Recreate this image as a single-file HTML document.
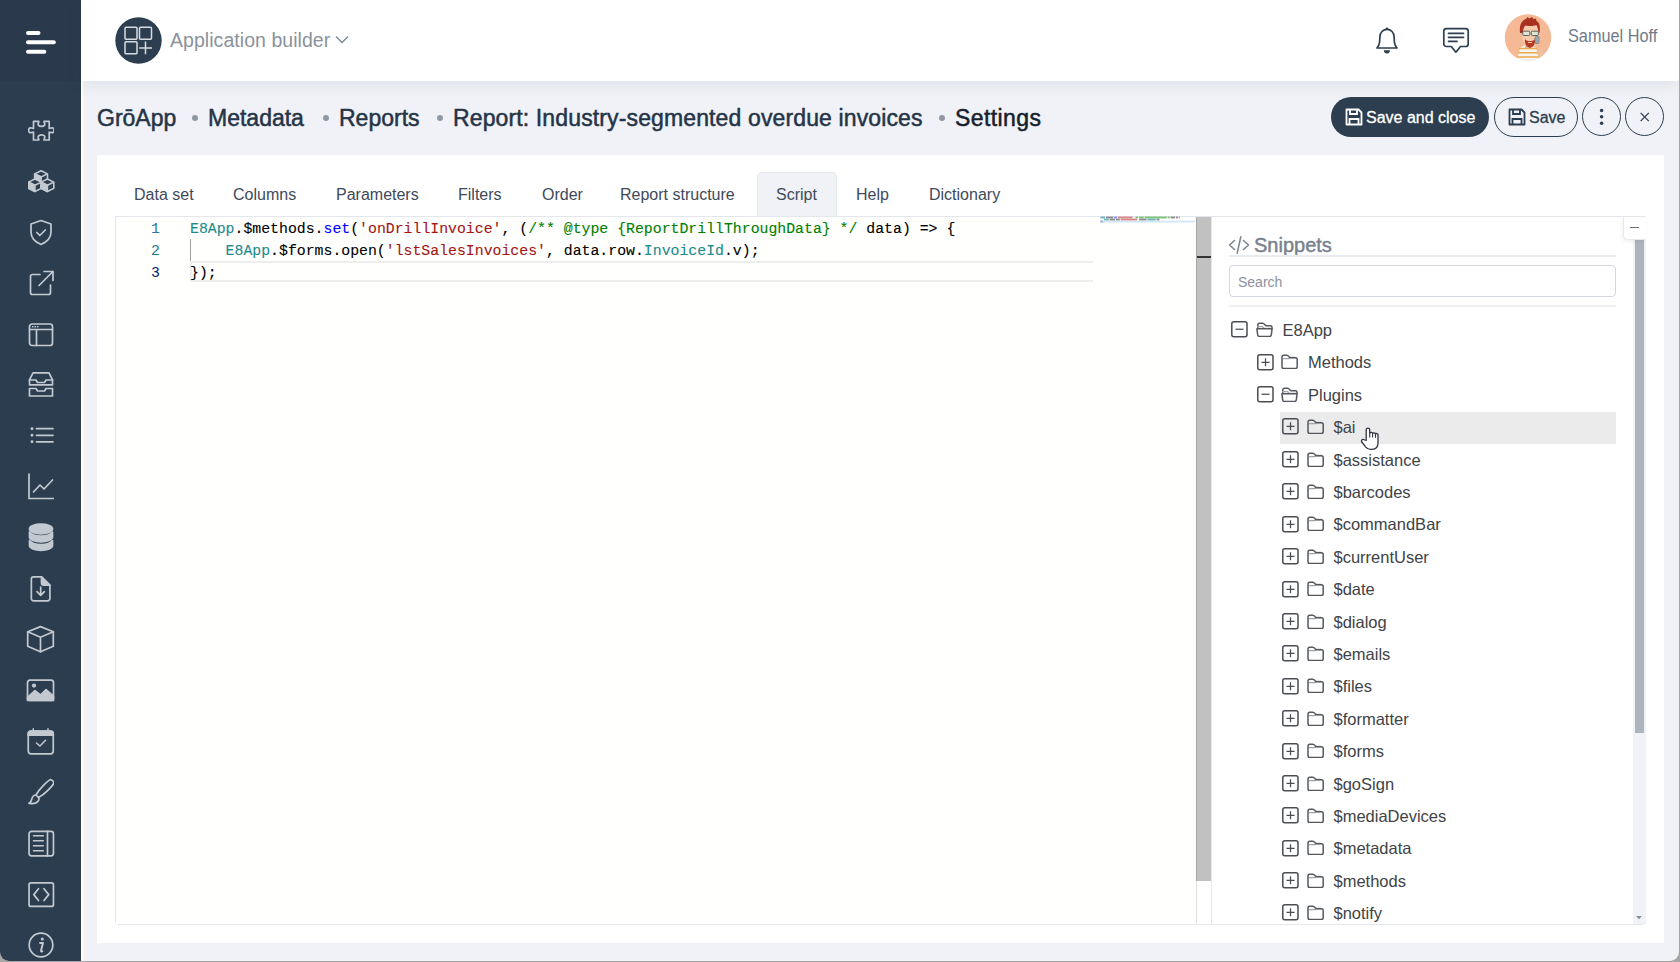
<!DOCTYPE html>
<html><head><meta charset="utf-8">
<style>
*{box-sizing:border-box;margin:0;padding:0}
html,body{width:1680px;height:962px;overflow:hidden;background:#a6a6a6;font-family:"Liberation Sans",sans-serif}
.abs{position:absolute}
#win{position:absolute;left:0;top:0;width:1679px;height:961px;border-radius:0 0 9px 9px;overflow:hidden;background:#f0f2f7}
#side{position:absolute;left:0;top:0;width:81px;height:961px;background:#2d3d50}
#sidetop{position:absolute;left:0;top:0;width:81px;height:81px;background:#2a3a4c}
#hdr{position:absolute;left:81px;top:0;width:1598px;height:81px;background:#fff;box-shadow:0 4px 14px rgba(50,60,80,.085)}
.crumb{position:absolute;top:104.7px;font-size:23px;color:#253447;white-space:nowrap;-webkit-text-stroke:.5px #253447}
.dot{position:absolute;top:115px;width:6px;height:6px;border-radius:50%;background:#8f98a3}
#card{position:absolute;left:97px;top:155px;width:1567px;height:788px;background:#fff}
.tab{position:absolute;top:185.5px;font-size:16px;color:#3e4a59;white-space:nowrap;transform-origin:0 0}
#tabact{position:absolute;left:757px;top:172px;width:80px;height:45px;background:#f0f2f7;border:1px solid #e4e7ed;border-bottom:none;border-radius:5px 5px 0 0}
#ed{position:absolute;left:115px;top:216px;width:1531px;height:709px;border:1px solid #e3e6eb;background:#fff;border-radius:0 0 4px 4px}
#code{position:absolute;left:116px;top:217px;width:1080px;height:707px;background:#fffffd}
.ln{position:absolute;left:116px;width:44px;text-align:right;font-family:"Liberation Mono",monospace;font-size:14.8px;color:#237893}
.cl{position:absolute;left:190px;font-family:"Liberation Mono",monospace;font-size:14.835px;color:#000;white-space:pre;-webkit-text-stroke:.1px currentColor}
.k1{color:#218a8e}.k2{color:#0000ff}.k3{color:#a31515}.k4{color:#008000}.k5{color:#001080}
#sb{position:absolute;left:1196px;top:217px;width:16px;height:664px;background:#c1c1c1;border-left:1px solid #a8a8a8}
#sbline{position:absolute;left:1196px;top:881px;width:1px;height:42px;background:#e0e0e0}
#sbr{position:absolute;left:1211px;top:217px;width:1px;height:707px;background:#e6e8ec}
.tree{position:absolute;font-size:16.5px;color:#404347;white-space:nowrap}
</style></head><body>
<div id="win">
  <div id="side"></div>
  <div id="sidetop"></div>
  <div class="abs" style="left:81px;top:0;width:2px;height:961px;background:#fff"></div>
  <div id="hdr"></div>
  <svg class="abs" style="left:27.5px;top:119px" width="26" height="22" viewBox="0 0 26 22" fill="none" stroke="#c3c9d0" stroke-width="1.7" stroke-linejoin="round" stroke-linecap="round"><path d="M5.5 2.3H10.8C10.8 4 9.5 4.8 10.5 6.3C11.5 7.8 15.5 7.8 16.5 6.3C17.5 4.8 16 4 16 2.3H21.2V9.5C23 9.5 24 8.3 25 9C26.5 10 26.5 12.5 25 13.5C24 14.2 23 13 21.2 13V21H16C16 19.3 17.5 18.5 16.5 17C15.5 15.5 11.5 15.5 10.5 17C9.5 18.5 10.8 19.3 10.8 21H5.5V13C3.7 13 2.7 14.2 1.7 13.5C.2 12.5 .2 10 1.7 9C2.7 8.3 3.7 9.5 5.5 9.5Z"/></svg>
  <svg class="abs" style="left:27.5px;top:169px" width="28" height="26" viewBox="0 0 28 26"><path d="M13.10 1.80 L19.50 4.90 L19.50 11.20 L13.10 14.30 L6.70 11.20 L6.70 4.90Z" fill="#2d3d50" stroke="#c3c9d0" stroke-width="1.6" stroke-linejoin="round"/><path d="M6.70 4.90 L13.10 8.00 L13.10 14.30 L6.70 11.20Z" fill="#c3c9d0" stroke="#c3c9d0" stroke-width="1.6" stroke-linejoin="round"/><path d="M6.70 4.90L13.10 8.00L19.50 4.90" fill="none" stroke="#c3c9d0" stroke-width="1.6" stroke-linejoin="round"/><path d="M6.90 10.00 L13.30 13.10 L13.30 19.40 L6.90 22.50 L0.50 19.40 L0.50 13.10Z" fill="#2d3d50" stroke="#c3c9d0" stroke-width="1.6" stroke-linejoin="round"/><path d="M0.50 13.10 L6.90 16.20 L6.90 22.50 L0.50 19.40Z" fill="#c3c9d0" stroke="#c3c9d0" stroke-width="1.6" stroke-linejoin="round"/><path d="M0.50 13.10L6.90 16.20L13.30 13.10" fill="none" stroke="#c3c9d0" stroke-width="1.6" stroke-linejoin="round"/><path d="M19.40 10.00 L25.80 13.10 L25.80 19.40 L19.40 22.50 L13.00 19.40 L13.00 13.10Z" fill="#2d3d50" stroke="#c3c9d0" stroke-width="1.6" stroke-linejoin="round"/><path d="M13.00 13.10 L19.40 16.20 L19.40 22.50 L13.00 19.40Z" fill="#c3c9d0" stroke="#c3c9d0" stroke-width="1.6" stroke-linejoin="round"/><path d="M13.00 13.10L19.40 16.20L25.80 13.10" fill="none" stroke="#c3c9d0" stroke-width="1.6" stroke-linejoin="round"/></svg>
  <svg class="abs" style="left:27.5px;top:219px" width="26" height="28" viewBox="0 0 26 28" fill="none" stroke="#c3c9d0" stroke-width="1.7" stroke-linejoin="round" stroke-linecap="round"><path d="M13 1.5l10 3.5v8c0 6-4.3 10-10 12.5-5.7-2.5-10-6.5-10-12.5v-8z"/><path d="M8.8 13.5l3 3 5.5-5.5"/></svg>
  <svg class="abs" style="left:27.5px;top:269px" width="26" height="28" viewBox="0 0 26 28" fill="none" stroke="#c3c9d0" stroke-width="1.7" stroke-linejoin="round" stroke-linecap="round"><path d="M12 5.5h-7.5a2 2 0 0 0-2 2v16a2 2 0 0 0 2 2h16a2 2 0 0 0 2-2v-7.5"/><path d="M11 16.5l14-14M16 2.5h9v9"/></svg>
  <svg class="abs" style="left:27.5px;top:322px" width="26" height="26" viewBox="0 0 26 26" fill="none" stroke="#c3c9d0" stroke-width="1.7" stroke-linejoin="round" stroke-linecap="round"><rect x="1.5" y="2" width="23" height="21.5" rx="2.5"/><path d="M1.5 7.5h23M8.5 7.5v16"/><path d="M4.5 4.8h.5M7 4.8h.5M9.5 4.8h.5" stroke-width="1.4"/></svg>
  <svg class="abs" style="left:27.5px;top:371px" width="26" height="28" viewBox="0 0 26 28" fill="none" stroke="#c3c9d0" stroke-width="1.7" stroke-linejoin="round" stroke-linecap="round"><path d="M5 1.8h16l3.5 7v5h-23v-5z"/><path d="M1.5 9h6.5l1.5 2.5h7l1.5-2.5h6.5"/><path d="M1.5 17.5h6.5l1.5 2.5h7l1.5-2.5h6.5v7.5h-23z"/></svg>
  <svg class="abs" style="left:27.5px;top:426px" width="26" height="20" viewBox="0 0 26 20" fill="none" stroke="#c3c9d0" stroke-width="1.7" stroke-linejoin="round" stroke-linecap="round"><circle cx="4" cy="2.7" r=".6" fill="#c3c9d0"/><circle cx="4" cy="9.3" r=".6" fill="#c3c9d0"/><circle cx="4" cy="15.8" r=".6" fill="#c3c9d0"/><path d="M8.5 2.7h16.5M8.5 9.3h16.5M8.5 15.8h16.5"/></svg>
  <svg class="abs" style="left:27.5px;top:473px" width="26" height="28" viewBox="0 0 26 28" fill="none" stroke="#c3c9d0" stroke-width="1.7" stroke-linejoin="round" stroke-linecap="round"><path d="M1 1v24.5h25"/><path d="M5.5 19l6.5-7 4 4 8.5-9"/></svg>
  <svg class="abs" style="left:27.5px;top:523px" width="26" height="30" viewBox="0 0 26 30" fill="none" stroke="#c3c9d0" stroke-width="1.7" stroke-linejoin="round" stroke-linecap="round"><ellipse cx="13" cy="6" rx="11.5" ry="4.8" fill="#c3c9d0"/><path d="M1.5 9v5c0 2.6 5.2 4.8 11.5 4.8s11.5-2.2 11.5-4.8v-5c-1.5 2.4-6 4-11.5 4s-10-1.6-11.5-4z" fill="#c3c9d0"/><path d="M1.5 17.5v5c0 2.6 5.2 4.8 11.5 4.8s11.5-2.2 11.5-4.8v-5c-1.5 2.4-6 4-11.5 4s-10-1.6-11.5-4z" fill="#c3c9d0"/></svg>
  <svg class="abs" style="left:29px;top:574px" width="24" height="30" viewBox="0 0 24 30" fill="none" stroke="#c3c9d0" stroke-width="1.7" stroke-linejoin="round" stroke-linecap="round"><path d="M4.5 2.85H12.5L20.9 11.25V24.6A2.2 2.2 0 0 1 18.7 26.85H4.55A2.2 2.2 0 0 1 2.35 24.6V5.05A2.2 2.2 0 0 1 4.5 2.85Z"/><path d="M12.5 2.85V8.9A2.2 2.2 0 0 0 14.7 11.1H20.9Z" fill="#c3c9d0"/><path d="M11.7 13V21M8 17.6L11.7 21.3L15.4 17.6"/></svg>
  <svg class="abs" style="left:26px;top:625px" width="30" height="30" viewBox="0 0 30 30" fill="none" stroke="#c3c9d0" stroke-width="1.7" stroke-linejoin="round" stroke-linecap="round"><path d="M14.5 1.6L27.3 6.8V21.2L14.5 26.8L1.7 21.2V6.8Z"/><path d="M1.7 6.8L14.5 12.3L27.3 6.8M14.5 12.3V26.8"/></svg>
  <svg class="abs" style="left:26px;top:678px" width="30" height="26" viewBox="0 0 30 26" fill="none" stroke="#c3c9d0" stroke-width="1.7" stroke-linejoin="round" stroke-linecap="round"><rect x="1.5" y="2.2" width="26" height="20.3" rx="2.5"/><circle cx="8" cy="7.6" r="2.1" fill="#c3c9d0" stroke="none"/><path d="M1.5 19.5l7.5-6.8 5.5 4.3 5.5-5.3 7.5 6.5v4.3h-26z" fill="#c3c9d0"/></svg>
  <svg class="abs" style="left:26px;top:727px" width="30" height="30" viewBox="0 0 30 30" fill="none" stroke="#c3c9d0" stroke-width="1.7" stroke-linejoin="round" stroke-linecap="round"><rect x="2.25" y="4.15" width="25" height="22.7" rx="2.8"/><path d="M2.25 8.2V6.9A2.8 2.8 0 0 1 5.05 4.15H24.45A2.8 2.8 0 0 1 27.25 6.9V8.2Z" fill="#c3c9d0"/><path d="M7.25 1.8v2.4M22 1.8v2.4" stroke-width="1.5"/><path d="M10.5 16l3.4 3 5.7-5.7" stroke-width="1.5"/></svg>
  <svg class="abs" style="left:27.5px;top:778px" width="26" height="28" viewBox="0 0 26 28" fill="none" stroke="#c3c9d0" stroke-width="1.7" stroke-linejoin="round" stroke-linecap="round"><path d="M25 1.5c-3 1.5-11 9-14.5 15.5l2.5 2.5c6.5-3.5 14-11.5 15.5-14.5-.5-1.5-2-3-3.5-3.5z" transform="translate(-2.5,0)"/><path d="M8 17c-3 0-4 2.5-4.5 5-.3 1.5-1.5 2.8-2.5 3.3 3 .5 7.5 0 9-2 1-1.3 1-3 .5-4"/></svg>
  <svg class="abs" style="left:26.5px;top:829px" width="30" height="30" viewBox="0 0 30 30" fill="none" stroke="#c3c9d0" stroke-width="1.7" stroke-linejoin="round" stroke-linecap="round"><rect x="2.05" y="2.45" width="24.4" height="24.4" rx="2.5"/><path d="M20.5 2.45v24.4"/><path d="M6.5 6.8h9.8M6.5 11.8h9.8M6.5 16.8h9.8M6.5 21.8h9.8" stroke-width="1.6"/></svg>
  <svg class="abs" style="left:26.5px;top:880px" width="30" height="30" viewBox="0 0 30 30" fill="none" stroke="#c3c9d0" stroke-width="1.7" stroke-linejoin="round" stroke-linecap="round"><rect x="2.05" y="2.85" width="24.4" height="23.6" rx="2"/><path d="M11.5 8.7L6.8 14.6L11.5 20.5M17 8.7L21.7 14.6L17 20.5"/></svg>
  <svg class="abs" style="left:27.5px;top:931px" width="26" height="28" viewBox="0 0 26 28"><circle cx="13" cy="14" r="11.8" fill="none" stroke="#c3c9d0" stroke-width="1.7"/><circle cx="14.3" cy="8" r="1.5" fill="#c3c9d0"/><path d="M12 12h3l-2 7.5c-.2.8.3 1.2 1.3.8" fill="none" stroke="#c3c9d0" stroke-width="1.9" stroke-linecap="round" stroke-linejoin="round"/></svg>

  <!-- header -->
  <svg class="abs" style="left:20px;top:25px" width="42" height="34" viewBox="0 0 42 34">
    <g stroke="#fff" stroke-width="4" stroke-linecap="round" fill="none">
      <line x1="8" y1="8" x2="18.5" y2="8"/>
      <line x1="8" y1="17.3" x2="33.8" y2="17.3"/>
      <line x1="8" y1="26.8" x2="24.3" y2="26.8"/>
    </g>
  </svg>
  <svg class="abs" style="left:115px;top:17px" width="47" height="47" viewBox="0 0 47 47">
    <circle cx="23.5" cy="23.5" r="23.2" fill="#2c3e50"/>
    <g fill="none" stroke="#d7dce2" stroke-width="1.5">
      <rect x="10" y="10.2" width="12" height="12" rx="1"/>
      <rect x="24.5" y="10.2" width="12" height="12" rx="1"/>
      <rect x="10" y="24.7" width="12" height="12" rx="1"/>
      <path d="M30.5 24.5v12.8M24.2 30.9h12.8"/>
    </g>
  </svg>
  <div class="abs" style="left:170px;top:28.8px;font-size:19.5px;color:#8b929d;white-space:nowrap;letter-spacing:.05px">Application builder</div>
  <svg class="abs" style="left:334px;top:33px" width="16" height="12" viewBox="0 0 16 12">
    <path d="M2 3.5l6 6 6-6" fill="none" stroke="#7f8894" stroke-width="1.5"/>
  </svg>
  <svg class="abs" style="left:1374px;top:25px" width="26" height="32" viewBox="0 0 26 32">
    <path d="M3 23L4.8 20.3C5.6 18 5.9 15.5 5.9 12C5.9 7.5 9 4.3 13 4.3S20.1 7.5 20.1 12C20.1 15.5 20.4 18 21.2 20.3L23 23Z" fill="none" stroke="#2c3e50" stroke-width="1.7" stroke-linejoin="round"/>
    <circle cx="13" cy="3.6" r="1.2" fill="#2c3e50"/>
    <path d="M9.8 25.3h6.2a3.1 3.1 0 0 1-6.2 0z" fill="#2c3e50"/>
  </svg>
  <svg class="abs" style="left:1440px;top:25px" width="32" height="30" viewBox="0 0 32 30">
    <path d="M6.3 3.6h19.4a2.5 2.5 0 0 1 2.5 2.5v12.9a2.5 2.5 0 0 1-2.5 2.5h-5.2l-4.6 5.7-4.6-5.7h-5a2.5 2.5 0 0 1-2.5-2.5v-12.9a2.5 2.5 0 0 1 2.5-2.5z" fill="none" stroke="#2c3e50" stroke-width="1.7" stroke-linejoin="round"/>
    <path d="M8.5 8.4h15M8.5 12.35h15M8.5 16.45h8.5" stroke="#2c3e50" stroke-width="1.7" stroke-linecap="round"/>
  </svg>
  <svg class="abs" style="left:1504px;top:14px" width="48" height="48" viewBox="0 0 48 48">
    <defs><clipPath id="avc"><circle cx="24" cy="23.5" r="23.2"/></clipPath></defs>
    <circle cx="24" cy="23.5" r="23.2" fill="#f6b996"/>
    <g clip-path="url(#avc)">
      <path d="M33 33l5 2 3 9-3 4h-4z" fill="#eec0a0"/>
      <path d="M13 48l2-11c1-4 4-6 9-6s8 2 9 6l2 11z" fill="#f6f4f2"/>
      <path d="M14.5 34.5h19M13.8 38.8h20.5M13.2 43h21.5" stroke="#eea94a" stroke-width="1.6"/>
      <path d="M21 30h6v4h-6z" fill="#e8b894"/>
      <path d="M18.5 17c0-6 2.5-9 8-9s8 3 8 9v6c0 6-3.5 10-8 10s-8-4-8-10z" fill="#f4ccad"/>
      <path d="M16 19c-1-8 2-13 6-14l1.5-2 2 1.5 2.5-1.5 1.5 2 2.5-.5.5 2.5c3 1.5 4 5 3 12l-1.3-1c0-3-1-6-2-7-2 1-6 1.5-10.5.5-2 1-2.5 4-3 7.5z" fill="#a8321f"/>
      <path d="M21 25c-.5 3 .5 6 2 7.5l3 1.5 3-1.5c1.5-1.5 2.5-4.5 2-7.5-1 1.5-2.5 2-5 2s-4-.5-5-2z" fill="#b23b22"/>
      <path d="M24 28.5h4" stroke="#f1c4a4" stroke-width="1.1"/>
      <rect x="18.8" y="17.2" width="7" height="4.3" rx="1" fill="#dfe6d8" stroke="#555" stroke-width=".9"/>
      <rect x="27.3" y="17.2" width="7" height="4.3" rx="1" fill="#dfe6d8" stroke="#555" stroke-width=".9"/>
      <rect x="31" y="22.5" width="4" height="7" rx="1" fill="#9aa6b2" stroke="#6b7480" stroke-width=".6"/>
    </g>
  </svg>
  <div class="abs" style="left:1568px;top:26.3px;font-size:17.5px;color:#6f7a87;white-space:nowrap;transform:scaleX(.93);transform-origin:0 0">Samuel Hoff</div>
  <div class="crumb" style="left:97px">GrōApp</div>
  <div class="dot" style="left:192px"></div>
  <div class="crumb" style="left:208px">Metadata</div>
  <div class="dot" style="left:323px"></div>
  <div class="crumb" style="left:339px">Reports</div>
  <div class="dot" style="left:437px"></div>
  <div class="crumb" style="left:453px;letter-spacing:.13px">Report: Industry-segmented overdue invoices</div>
  <div class="dot" style="left:939px"></div>
  <div class="crumb" style="left:955px;letter-spacing:.4px;color:#17212c;-webkit-text-stroke-color:#17212c">Settings</div>


  <!-- buttons -->
  <div class="abs" style="left:1331px;top:97px;width:158px;height:40px;border-radius:20px;background:#2c3e50"></div>
  <svg class="abs" style="left:1344px;top:107px" width="20" height="20" viewBox="0 0 20 20">
    <path d="M2.5 2.5h12l3 3v12h-15z" fill="none" stroke="#fff" stroke-width="1.8" stroke-linejoin="round"/>
    <path d="M6 2.5v4.5h7v-4.5M5.5 17.5v-5.5h9v5.5" fill="none" stroke="#fff" stroke-width="1.8"/>
  </svg>
  <div class="abs" style="left:1366px;top:109px;font-size:16px;color:#fff;white-space:nowrap;-webkit-text-stroke:.3px #fff">Save and close</div>
  <div class="abs" style="left:1494px;top:97px;width:84px;height:40px;border-radius:20px;border:1.3px solid #2c3e50"></div>
  <svg class="abs" style="left:1507px;top:107px" width="20" height="20" viewBox="0 0 20 20">
    <path d="M2.5 2.5h12l3 3v12h-15z" fill="none" stroke="#2c3e50" stroke-width="1.8" stroke-linejoin="round"/>
    <path d="M6 2.5v4.5h7v-4.5M5.5 17.5v-5.5h9v5.5" fill="none" stroke="#2c3e50" stroke-width="1.8"/>
  </svg>
  <div class="abs" style="left:1529px;top:109px;font-size:16px;color:#2c3e50;white-space:nowrap;-webkit-text-stroke:.3px #2c3e50">Save</div>
  <div class="abs" style="left:1582px;top:97px;width:39px;height:39px;border-radius:50%;border:1.3px solid #2c3e50"></div>
  <svg class="abs" style="left:1582px;top:97px" width="39" height="39" viewBox="0 0 39 39">
    <circle cx="19.6" cy="13.4" r="1.75" fill="#2c3e50"/><circle cx="19.6" cy="19.8" r="1.75" fill="#2c3e50"/><circle cx="19.6" cy="26.2" r="1.75" fill="#2c3e50"/>
  </svg>
  <div class="abs" style="left:1625px;top:97px;width:39px;height:39px;border-radius:50%;border:1.3px solid #2c3e50"></div>
  <svg class="abs" style="left:1625px;top:97px" width="39" height="39" viewBox="0 0 39 39">
    <path d="M15.6 15.9l8.2 8.2M23.8 15.9l-8.2 8.2" stroke="#2c3e50" stroke-width="1.3"/>
  </svg>
  <div id="card"></div>
  <div id="tabact"></div>
  <div class="tab" style="left:134px">Data set</div>
  <div class="tab" style="left:233px">Columns</div>
  <div class="tab" style="left:336px">Parameters</div>
  <div class="tab" style="left:458px">Filters</div>
  <div class="tab" style="left:542px">Order</div>
  <div class="tab" style="left:620px">Report structure</div>
  <div class="tab" style="left:776px">Script</div>
  <div class="tab" style="left:856px">Help</div>
  <div class="tab" style="left:929px">Dictionary</div>

  <div id="ed"></div>
  <div id="code"></div>
  <div class="abs" style="left:190px;top:261px;width:903px;height:21px;border:2px solid #eeeeee;border-right:none"></div>
  <div class="abs" style="left:190px;top:239px;width:1px;height:22px;background:#a0a0a0"></div>
  <div class="ln" style="top:220.5px">1</div>
  <div class="ln" style="top:242.5px">2</div>
  <div class="ln" style="top:264.5px;color:#0b216f">3</div>
  <div class="cl" style="top:220.5px"><span class="k1">E8App</span>.$methods.<span class="k2">set</span>(<span class="k3">'onDrillInvoice'</span>, (<span class="k4">/** @type {ReportDrillThroughData} */</span> data) =&gt; {</div>
  <div class="cl" style="top:242.5px">    <span class="k1">E8App</span>.$forms.open(<span class="k3">'lstSalesInvoices'</span>, data.row.<span class="k1">InvoiceId</span>.v);</div>
  <div class="cl" style="top:264.5px">});</div>
  <div id="sb"></div>
  <div id="sbline"></div>
  <svg class="abs" style="left:0;top:0" width="1680" height="300" viewBox="0 0 1680 300"><rect x="1100" y="220.6" width="95" height="2" fill="#d6e8fb"/><g opacity=".75"><rect x="1100.40" y="216.60" width="4.61" height="1.8" fill="#3a9aa8"/><rect x="1105.93" y="216.60" width="7.38" height="1.8" fill="#666"/><rect x="1114.23" y="216.60" width="2.77" height="1.8" fill="#5a5aff"/><rect x="1117.92" y="216.60" width="14.75" height="1.8" fill="#d06060"/><rect x="1135.44" y="216.60" width="2.77" height="1.8" fill="#4caf4c"/><rect x="1139.12" y="216.60" width="4.61" height="1.8" fill="#4caf4c"/><rect x="1144.66" y="216.60" width="22.13" height="1.8" fill="#4caf4c"/><rect x="1167.71" y="216.60" width="1.84" height="1.8" fill="#4caf4c"/><rect x="1170.47" y="216.60" width="4.61" height="1.8" fill="#666"/><rect x="1176.00" y="216.60" width="1.84" height="1.8" fill="#666"/><rect x="1178.77" y="216.60" width="0.92" height="1.8" fill="#666"/><rect x="1104.09" y="218.60" width="4.61" height="1.8" fill="#3a9aa8"/><rect x="1109.62" y="218.60" width="5.53" height="1.8" fill="#666"/><rect x="1116.07" y="218.60" width="3.69" height="1.8" fill="#666"/><rect x="1120.68" y="218.60" width="16.60" height="1.8" fill="#d06060"/><rect x="1139.12" y="218.60" width="7.38" height="1.8" fill="#666"/><rect x="1147.42" y="218.60" width="8.30" height="1.8" fill="#3a9aa8"/><rect x="1156.64" y="218.60" width="2.77" height="1.8" fill="#666"/><rect x="1100.40" y="220.60" width="2.77" height="1.8" fill="#8899bb"/></g></svg>
  <div class="abs" style="left:1197px;top:256px;width:14px;height:2px;background:#333"></div>
  <div id="sbr"></div>

  <!-- snippets -->
  <svg class="abs" style="left:1228px;top:235px" width="22" height="20" viewBox="0 0 22 20" fill="none" stroke="#7c8591" stroke-width="1.6" stroke-linecap="round" stroke-linejoin="round">
    <path d="M6.5 5.5l-5 4.5 5 4.5M15.5 5.5l5 4.5-5 4.5M12.8 1.8l-3.6 16.4"/>
  </svg>
  <div class="abs" style="left:1254px;top:234px;font-size:20px;color:#78828e;white-space:nowrap;-webkit-text-stroke:.45px #78828e">Snippets</div>
  <div class="abs" style="left:1229px;top:255px;width:387px;height:2px;background:#e8ebef"></div>
  <div class="abs" style="left:1229px;top:265px;width:387px;height:32px;border:1.3px solid #d3d8de;border-radius:4px;background:#fff"></div>
  <div class="abs" style="left:1238px;top:274px;font-size:14px;color:#8a939e;white-space:nowrap">Search</div>
  <div class="abs" style="left:1229px;top:305px;width:387px;height:2px;background:#eef0f3"></div>
  <div class="abs" style="left:1280px;top:412px;width:336px;height:32px;background:#ebebeb"></div>
  <svg class="abs" style="left:1231.0px;top:321.2px" width="17" height="17" viewBox="0 0 17 17" fill="none" stroke="#4a4d52"><rect x=".8" y=".8" width="15.2" height="15" rx="2" stroke-width="1.5"/><g stroke-width="1.25"><path d="M4.5 8.25h8"/></g></svg>
  <svg class="abs" style="left:1255.8px;top:322.0px" width="17" height="15" viewBox="0 0 17 15" fill="none" stroke="#54585d" stroke-width="1.5" stroke-linejoin="round"><path d="M1.8 6.8V3a1.8 1.8 0 0 1 1.8-1.8h3c1 0 1.5.5 2 1.2l.5.6c.4.5.8.7 1.5.7h3.8a1.6 1.6 0 0 1 1.6 1.6V6.8"/><path d="M1.2 4.6h5.5l1.3 1.7h7.2" stroke="#a0a4a8" stroke-width="1.2"/><path d="M.9 6.8h15.2l-.8 6a1.8 1.8 0 0 1-1.8 1.6h-10a1.8 1.8 0 0 1-1.8-1.6z"/></svg>
  <div class="tree" style="left:1282.5px;top:321.0px">E8App</div>
  <svg class="abs" style="left:1256.5px;top:353.6px" width="17" height="17" viewBox="0 0 17 17" fill="none" stroke="#4a4d52"><rect x=".8" y=".8" width="15.2" height="15" rx="2" stroke-width="1.5"/><g stroke-width="1.25"><path d="M4.5 8.25h8M8.5 4.25v8"/></g></svg>
  <svg class="abs" style="left:1281.3px;top:354.4px" width="17" height="15" viewBox="0 0 17 15" fill="none" stroke="#54585d" stroke-width="1.5" stroke-linejoin="round"><path d="M1.8 4.6h6.2l1.3-1.1h5" stroke="#a0a4a8" stroke-width="1.4"/><path d="M1 3a1.8 1.8 0 0 1 1.8-1.8h3c1 0 1.5.5 2 1.2l.5.6c.4.5.8.7 1.5.7h4.6a1.8 1.8 0 0 1 1.8 1.8v7.3a1.8 1.8 0 0 1-1.8 1.8h-11.6a1.8 1.8 0 0 1-1.8-1.8z"/></svg>
  <div class="tree" style="left:1308.0px;top:353.4px">Methods</div>
  <svg class="abs" style="left:1256.5px;top:386.1px" width="17" height="17" viewBox="0 0 17 17" fill="none" stroke="#4a4d52"><rect x=".8" y=".8" width="15.2" height="15" rx="2" stroke-width="1.5"/><g stroke-width="1.25"><path d="M4.5 8.25h8"/></g></svg>
  <svg class="abs" style="left:1281.3px;top:386.8px" width="17" height="15" viewBox="0 0 17 15" fill="none" stroke="#54585d" stroke-width="1.5" stroke-linejoin="round"><path d="M1.8 6.8V3a1.8 1.8 0 0 1 1.8-1.8h3c1 0 1.5.5 2 1.2l.5.6c.4.5.8.7 1.5.7h3.8a1.6 1.6 0 0 1 1.6 1.6V6.8"/><path d="M1.2 4.6h5.5l1.3 1.7h7.2" stroke="#a0a4a8" stroke-width="1.2"/><path d="M.9 6.8h15.2l-.8 6a1.8 1.8 0 0 1-1.8 1.6h-10a1.8 1.8 0 0 1-1.8-1.6z"/></svg>
  <div class="tree" style="left:1308.0px;top:385.8px">Plugins</div>
  <svg class="abs" style="left:1282.0px;top:418.4px" width="17" height="17" viewBox="0 0 17 17" fill="none" stroke="#4a4d52"><rect x=".8" y=".8" width="15.2" height="15" rx="2" stroke-width="1.5"/><g stroke-width="1.25"><path d="M4.5 8.25h8M8.5 4.25v8"/></g></svg>
  <svg class="abs" style="left:1306.8px;top:419.2px" width="17" height="15" viewBox="0 0 17 15" fill="none" stroke="#54585d" stroke-width="1.5" stroke-linejoin="round"><path d="M1.8 4.6h6.2l1.3-1.1h5" stroke="#a0a4a8" stroke-width="1.4"/><path d="M1 3a1.8 1.8 0 0 1 1.8-1.8h3c1 0 1.5.5 2 1.2l.5.6c.4.5.8.7 1.5.7h4.6a1.8 1.8 0 0 1 1.8 1.8v7.3a1.8 1.8 0 0 1-1.8 1.8h-11.6a1.8 1.8 0 0 1-1.8-1.8z"/></svg>
  <div class="tree" style="left:1333.5px;top:418.2px">$ai</div>
  <svg class="abs" style="left:1282.0px;top:450.9px" width="17" height="17" viewBox="0 0 17 17" fill="none" stroke="#4a4d52"><rect x=".8" y=".8" width="15.2" height="15" rx="2" stroke-width="1.5"/><g stroke-width="1.25"><path d="M4.5 8.25h8M8.5 4.25v8"/></g></svg>
  <svg class="abs" style="left:1306.8px;top:451.6px" width="17" height="15" viewBox="0 0 17 15" fill="none" stroke="#54585d" stroke-width="1.5" stroke-linejoin="round"><path d="M1.8 4.6h6.2l1.3-1.1h5" stroke="#a0a4a8" stroke-width="1.4"/><path d="M1 3a1.8 1.8 0 0 1 1.8-1.8h3c1 0 1.5.5 2 1.2l.5.6c.4.5.8.7 1.5.7h4.6a1.8 1.8 0 0 1 1.8 1.8v7.3a1.8 1.8 0 0 1-1.8 1.8h-11.6a1.8 1.8 0 0 1-1.8-1.8z"/></svg>
  <div class="tree" style="left:1333.5px;top:450.6px">$assistance</div>
  <svg class="abs" style="left:1282.0px;top:483.2px" width="17" height="17" viewBox="0 0 17 17" fill="none" stroke="#4a4d52"><rect x=".8" y=".8" width="15.2" height="15" rx="2" stroke-width="1.5"/><g stroke-width="1.25"><path d="M4.5 8.25h8M8.5 4.25v8"/></g></svg>
  <svg class="abs" style="left:1306.8px;top:484.0px" width="17" height="15" viewBox="0 0 17 15" fill="none" stroke="#54585d" stroke-width="1.5" stroke-linejoin="round"><path d="M1.8 4.6h6.2l1.3-1.1h5" stroke="#a0a4a8" stroke-width="1.4"/><path d="M1 3a1.8 1.8 0 0 1 1.8-1.8h3c1 0 1.5.5 2 1.2l.5.6c.4.5.8.7 1.5.7h4.6a1.8 1.8 0 0 1 1.8 1.8v7.3a1.8 1.8 0 0 1-1.8 1.8h-11.6a1.8 1.8 0 0 1-1.8-1.8z"/></svg>
  <div class="tree" style="left:1333.5px;top:483.0px">$barcodes</div>
  <svg class="abs" style="left:1282.0px;top:515.6px" width="17" height="17" viewBox="0 0 17 17" fill="none" stroke="#4a4d52"><rect x=".8" y=".8" width="15.2" height="15" rx="2" stroke-width="1.5"/><g stroke-width="1.25"><path d="M4.5 8.25h8M8.5 4.25v8"/></g></svg>
  <svg class="abs" style="left:1306.8px;top:516.4px" width="17" height="15" viewBox="0 0 17 15" fill="none" stroke="#54585d" stroke-width="1.5" stroke-linejoin="round"><path d="M1.8 4.6h6.2l1.3-1.1h5" stroke="#a0a4a8" stroke-width="1.4"/><path d="M1 3a1.8 1.8 0 0 1 1.8-1.8h3c1 0 1.5.5 2 1.2l.5.6c.4.5.8.7 1.5.7h4.6a1.8 1.8 0 0 1 1.8 1.8v7.3a1.8 1.8 0 0 1-1.8 1.8h-11.6a1.8 1.8 0 0 1-1.8-1.8z"/></svg>
  <div class="tree" style="left:1333.5px;top:515.4px">$commandBar</div>
  <svg class="abs" style="left:1282.0px;top:548.0px" width="17" height="17" viewBox="0 0 17 17" fill="none" stroke="#4a4d52"><rect x=".8" y=".8" width="15.2" height="15" rx="2" stroke-width="1.5"/><g stroke-width="1.25"><path d="M4.5 8.25h8M8.5 4.25v8"/></g></svg>
  <svg class="abs" style="left:1306.8px;top:548.8px" width="17" height="15" viewBox="0 0 17 15" fill="none" stroke="#54585d" stroke-width="1.5" stroke-linejoin="round"><path d="M1.8 4.6h6.2l1.3-1.1h5" stroke="#a0a4a8" stroke-width="1.4"/><path d="M1 3a1.8 1.8 0 0 1 1.8-1.8h3c1 0 1.5.5 2 1.2l.5.6c.4.5.8.7 1.5.7h4.6a1.8 1.8 0 0 1 1.8 1.8v7.3a1.8 1.8 0 0 1-1.8 1.8h-11.6a1.8 1.8 0 0 1-1.8-1.8z"/></svg>
  <div class="tree" style="left:1333.5px;top:547.8px">$currentUser</div>
  <svg class="abs" style="left:1282.0px;top:580.5px" width="17" height="17" viewBox="0 0 17 17" fill="none" stroke="#4a4d52"><rect x=".8" y=".8" width="15.2" height="15" rx="2" stroke-width="1.5"/><g stroke-width="1.25"><path d="M4.5 8.25h8M8.5 4.25v8"/></g></svg>
  <svg class="abs" style="left:1306.8px;top:581.2px" width="17" height="15" viewBox="0 0 17 15" fill="none" stroke="#54585d" stroke-width="1.5" stroke-linejoin="round"><path d="M1.8 4.6h6.2l1.3-1.1h5" stroke="#a0a4a8" stroke-width="1.4"/><path d="M1 3a1.8 1.8 0 0 1 1.8-1.8h3c1 0 1.5.5 2 1.2l.5.6c.4.5.8.7 1.5.7h4.6a1.8 1.8 0 0 1 1.8 1.8v7.3a1.8 1.8 0 0 1-1.8 1.8h-11.6a1.8 1.8 0 0 1-1.8-1.8z"/></svg>
  <div class="tree" style="left:1333.5px;top:580.2px">$date</div>
  <svg class="abs" style="left:1282.0px;top:612.8px" width="17" height="17" viewBox="0 0 17 17" fill="none" stroke="#4a4d52"><rect x=".8" y=".8" width="15.2" height="15" rx="2" stroke-width="1.5"/><g stroke-width="1.25"><path d="M4.5 8.25h8M8.5 4.25v8"/></g></svg>
  <svg class="abs" style="left:1306.8px;top:613.6px" width="17" height="15" viewBox="0 0 17 15" fill="none" stroke="#54585d" stroke-width="1.5" stroke-linejoin="round"><path d="M1.8 4.6h6.2l1.3-1.1h5" stroke="#a0a4a8" stroke-width="1.4"/><path d="M1 3a1.8 1.8 0 0 1 1.8-1.8h3c1 0 1.5.5 2 1.2l.5.6c.4.5.8.7 1.5.7h4.6a1.8 1.8 0 0 1 1.8 1.8v7.3a1.8 1.8 0 0 1-1.8 1.8h-11.6a1.8 1.8 0 0 1-1.8-1.8z"/></svg>
  <div class="tree" style="left:1333.5px;top:612.6px">$dialog</div>
  <svg class="abs" style="left:1282.0px;top:645.2px" width="17" height="17" viewBox="0 0 17 17" fill="none" stroke="#4a4d52"><rect x=".8" y=".8" width="15.2" height="15" rx="2" stroke-width="1.5"/><g stroke-width="1.25"><path d="M4.5 8.25h8M8.5 4.25v8"/></g></svg>
  <svg class="abs" style="left:1306.8px;top:646.0px" width="17" height="15" viewBox="0 0 17 15" fill="none" stroke="#54585d" stroke-width="1.5" stroke-linejoin="round"><path d="M1.8 4.6h6.2l1.3-1.1h5" stroke="#a0a4a8" stroke-width="1.4"/><path d="M1 3a1.8 1.8 0 0 1 1.8-1.8h3c1 0 1.5.5 2 1.2l.5.6c.4.5.8.7 1.5.7h4.6a1.8 1.8 0 0 1 1.8 1.8v7.3a1.8 1.8 0 0 1-1.8 1.8h-11.6a1.8 1.8 0 0 1-1.8-1.8z"/></svg>
  <div class="tree" style="left:1333.5px;top:645.0px">$emails</div>
  <svg class="abs" style="left:1282.0px;top:677.6px" width="17" height="17" viewBox="0 0 17 17" fill="none" stroke="#4a4d52"><rect x=".8" y=".8" width="15.2" height="15" rx="2" stroke-width="1.5"/><g stroke-width="1.25"><path d="M4.5 8.25h8M8.5 4.25v8"/></g></svg>
  <svg class="abs" style="left:1306.8px;top:678.4px" width="17" height="15" viewBox="0 0 17 15" fill="none" stroke="#54585d" stroke-width="1.5" stroke-linejoin="round"><path d="M1.8 4.6h6.2l1.3-1.1h5" stroke="#a0a4a8" stroke-width="1.4"/><path d="M1 3a1.8 1.8 0 0 1 1.8-1.8h3c1 0 1.5.5 2 1.2l.5.6c.4.5.8.7 1.5.7h4.6a1.8 1.8 0 0 1 1.8 1.8v7.3a1.8 1.8 0 0 1-1.8 1.8h-11.6a1.8 1.8 0 0 1-1.8-1.8z"/></svg>
  <div class="tree" style="left:1333.5px;top:677.4px">$files</div>
  <svg class="abs" style="left:1282.0px;top:710.0px" width="17" height="17" viewBox="0 0 17 17" fill="none" stroke="#4a4d52"><rect x=".8" y=".8" width="15.2" height="15" rx="2" stroke-width="1.5"/><g stroke-width="1.25"><path d="M4.5 8.25h8M8.5 4.25v8"/></g></svg>
  <svg class="abs" style="left:1306.8px;top:710.8px" width="17" height="15" viewBox="0 0 17 15" fill="none" stroke="#54585d" stroke-width="1.5" stroke-linejoin="round"><path d="M1.8 4.6h6.2l1.3-1.1h5" stroke="#a0a4a8" stroke-width="1.4"/><path d="M1 3a1.8 1.8 0 0 1 1.8-1.8h3c1 0 1.5.5 2 1.2l.5.6c.4.5.8.7 1.5.7h4.6a1.8 1.8 0 0 1 1.8 1.8v7.3a1.8 1.8 0 0 1-1.8 1.8h-11.6a1.8 1.8 0 0 1-1.8-1.8z"/></svg>
  <div class="tree" style="left:1333.5px;top:709.8px">$formatter</div>
  <svg class="abs" style="left:1282.0px;top:742.5px" width="17" height="17" viewBox="0 0 17 17" fill="none" stroke="#4a4d52"><rect x=".8" y=".8" width="15.2" height="15" rx="2" stroke-width="1.5"/><g stroke-width="1.25"><path d="M4.5 8.25h8M8.5 4.25v8"/></g></svg>
  <svg class="abs" style="left:1306.8px;top:743.2px" width="17" height="15" viewBox="0 0 17 15" fill="none" stroke="#54585d" stroke-width="1.5" stroke-linejoin="round"><path d="M1.8 4.6h6.2l1.3-1.1h5" stroke="#a0a4a8" stroke-width="1.4"/><path d="M1 3a1.8 1.8 0 0 1 1.8-1.8h3c1 0 1.5.5 2 1.2l.5.6c.4.5.8.7 1.5.7h4.6a1.8 1.8 0 0 1 1.8 1.8v7.3a1.8 1.8 0 0 1-1.8 1.8h-11.6a1.8 1.8 0 0 1-1.8-1.8z"/></svg>
  <div class="tree" style="left:1333.5px;top:742.2px">$forms</div>
  <svg class="abs" style="left:1282.0px;top:774.8px" width="17" height="17" viewBox="0 0 17 17" fill="none" stroke="#4a4d52"><rect x=".8" y=".8" width="15.2" height="15" rx="2" stroke-width="1.5"/><g stroke-width="1.25"><path d="M4.5 8.25h8M8.5 4.25v8"/></g></svg>
  <svg class="abs" style="left:1306.8px;top:775.6px" width="17" height="15" viewBox="0 0 17 15" fill="none" stroke="#54585d" stroke-width="1.5" stroke-linejoin="round"><path d="M1.8 4.6h6.2l1.3-1.1h5" stroke="#a0a4a8" stroke-width="1.4"/><path d="M1 3a1.8 1.8 0 0 1 1.8-1.8h3c1 0 1.5.5 2 1.2l.5.6c.4.5.8.7 1.5.7h4.6a1.8 1.8 0 0 1 1.8 1.8v7.3a1.8 1.8 0 0 1-1.8 1.8h-11.6a1.8 1.8 0 0 1-1.8-1.8z"/></svg>
  <div class="tree" style="left:1333.5px;top:774.6px">$goSign</div>
  <svg class="abs" style="left:1282.0px;top:807.2px" width="17" height="17" viewBox="0 0 17 17" fill="none" stroke="#4a4d52"><rect x=".8" y=".8" width="15.2" height="15" rx="2" stroke-width="1.5"/><g stroke-width="1.25"><path d="M4.5 8.25h8M8.5 4.25v8"/></g></svg>
  <svg class="abs" style="left:1306.8px;top:808.0px" width="17" height="15" viewBox="0 0 17 15" fill="none" stroke="#54585d" stroke-width="1.5" stroke-linejoin="round"><path d="M1.8 4.6h6.2l1.3-1.1h5" stroke="#a0a4a8" stroke-width="1.4"/><path d="M1 3a1.8 1.8 0 0 1 1.8-1.8h3c1 0 1.5.5 2 1.2l.5.6c.4.5.8.7 1.5.7h4.6a1.8 1.8 0 0 1 1.8 1.8v7.3a1.8 1.8 0 0 1-1.8 1.8h-11.6a1.8 1.8 0 0 1-1.8-1.8z"/></svg>
  <div class="tree" style="left:1333.5px;top:807.0px">$mediaDevices</div>
  <svg class="abs" style="left:1282.0px;top:839.6px" width="17" height="17" viewBox="0 0 17 17" fill="none" stroke="#4a4d52"><rect x=".8" y=".8" width="15.2" height="15" rx="2" stroke-width="1.5"/><g stroke-width="1.25"><path d="M4.5 8.25h8M8.5 4.25v8"/></g></svg>
  <svg class="abs" style="left:1306.8px;top:840.4px" width="17" height="15" viewBox="0 0 17 15" fill="none" stroke="#54585d" stroke-width="1.5" stroke-linejoin="round"><path d="M1.8 4.6h6.2l1.3-1.1h5" stroke="#a0a4a8" stroke-width="1.4"/><path d="M1 3a1.8 1.8 0 0 1 1.8-1.8h3c1 0 1.5.5 2 1.2l.5.6c.4.5.8.7 1.5.7h4.6a1.8 1.8 0 0 1 1.8 1.8v7.3a1.8 1.8 0 0 1-1.8 1.8h-11.6a1.8 1.8 0 0 1-1.8-1.8z"/></svg>
  <div class="tree" style="left:1333.5px;top:839.4px">$metadata</div>
  <svg class="abs" style="left:1282.0px;top:872.0px" width="17" height="17" viewBox="0 0 17 17" fill="none" stroke="#4a4d52"><rect x=".8" y=".8" width="15.2" height="15" rx="2" stroke-width="1.5"/><g stroke-width="1.25"><path d="M4.5 8.25h8M8.5 4.25v8"/></g></svg>
  <svg class="abs" style="left:1306.8px;top:872.8px" width="17" height="15" viewBox="0 0 17 15" fill="none" stroke="#54585d" stroke-width="1.5" stroke-linejoin="round"><path d="M1.8 4.6h6.2l1.3-1.1h5" stroke="#a0a4a8" stroke-width="1.4"/><path d="M1 3a1.8 1.8 0 0 1 1.8-1.8h3c1 0 1.5.5 2 1.2l.5.6c.4.5.8.7 1.5.7h4.6a1.8 1.8 0 0 1 1.8 1.8v7.3a1.8 1.8 0 0 1-1.8 1.8h-11.6a1.8 1.8 0 0 1-1.8-1.8z"/></svg>
  <div class="tree" style="left:1333.5px;top:871.8px">$methods</div>
  <svg class="abs" style="left:1282.0px;top:904.4px" width="17" height="17" viewBox="0 0 17 17" fill="none" stroke="#4a4d52"><rect x=".8" y=".8" width="15.2" height="15" rx="2" stroke-width="1.5"/><g stroke-width="1.25"><path d="M4.5 8.25h8M8.5 4.25v8"/></g></svg>
  <svg class="abs" style="left:1306.8px;top:905.2px" width="17" height="15" viewBox="0 0 17 15" fill="none" stroke="#54585d" stroke-width="1.5" stroke-linejoin="round"><path d="M1.8 4.6h6.2l1.3-1.1h5" stroke="#a0a4a8" stroke-width="1.4"/><path d="M1 3a1.8 1.8 0 0 1 1.8-1.8h3c1 0 1.5.5 2 1.2l.5.6c.4.5.8.7 1.5.7h4.6a1.8 1.8 0 0 1 1.8 1.8v7.3a1.8 1.8 0 0 1-1.8 1.8h-11.6a1.8 1.8 0 0 1-1.8-1.8z"/></svg>
  <div class="tree" style="left:1333.5px;top:904.2px">$notify</div>

  <div class="abs" style="left:1633px;top:240px;width:13px;height:684px;background:#f0f2f7"></div>
  <div class="abs" style="left:1635px;top:240px;width:9px;height:493px;background:#adb4bd"></div>
  <div class="abs" style="left:1623px;top:217px;width:23px;height:23px;background:#fff;border:1px solid #e6e8ec;border-top:none;border-right:none;border-radius:0 0 0 5px;box-shadow:-1px 2px 4px rgba(0,0,0,.06)"></div>
  <div class="abs" style="left:1630px;top:227px;width:9px;height:1.3px;background:#707070"></div>
  <svg class="abs" style="left:1636.3px;top:915.5px" width="6" height="4" viewBox="0 0 6 4"><path d="M0 0h6l-3 3.3z" fill="#8a929c"/></svg>
  <svg class="abs" style="left:1355px;top:420px" width="30" height="32" viewBox="0 0 30 32"><path d="M11.2 20.5V9.8C11.2 7.6 14.7 7.6 14.7 9.8V13C15.5 12 17.5 12.2 17.6 13.3C18.5 12.5 20.3 12.7 20.5 13.8C21.3 13.2 23 13.5 23 14.8V23C23 26.5 21 29.3 17 29.3H15.5C13 29.3 11.5 28 10.5 26.8L6.8 22C5.8 20.8 7 19 8.5 19.5Z" fill="#fff" stroke="#2f3440" stroke-width="1.3" stroke-linejoin="round"/><path d="M14.7 13v4.5M17.6 13.3v4.2M20.5 13.8v4" stroke="#2f3440" stroke-width="1.1"/></svg>
</div>
</body></html>
